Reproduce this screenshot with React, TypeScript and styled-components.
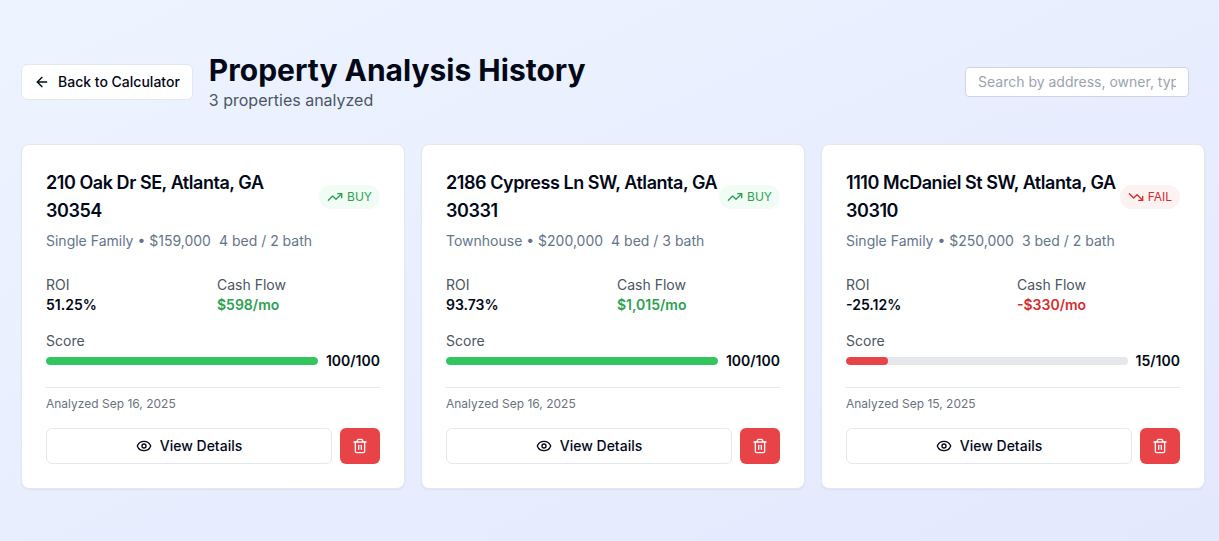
import React from "react";
import styled, { createGlobalStyle } from "styled-components";
import { ArrowLeft, Eye, Trash2, TrendingDown, TrendingUp } from "lucide-react";

type Tone = "good" | "bad";

interface Property {
  id: number;
  address: string;
  kind: string;
  price: string;
  rooms: string;
  verdict: string;
  tone: Tone;
  roi: string;
  cashFlow: string;
  score: number;
  analyzed: string;
}

const properties: Property[] = [
  {
    id: 1,
    address: "210 Oak Dr SE, Atlanta, GA 30354",
    kind: "Single Family",
    price: "$159,000",
    rooms: "4 bed / 2 bath",
    verdict: "BUY",
    tone: "good",
    roi: "51.25%",
    cashFlow: "$598/mo",
    score: 100,
    analyzed: "Sep 16, 2025",
  },
  {
    id: 2,
    address: "2186 Cypress Ln SW, Atlanta, GA 30331",
    kind: "Townhouse",
    price: "$200,000",
    rooms: "4 bed / 3 bath",
    verdict: "BUY",
    tone: "good",
    roi: "93.73%",
    cashFlow: "$1,015/mo",
    score: 100,
    analyzed: "Sep 16, 2025",
  },
  {
    id: 3,
    address: "1110 McDaniel St SW, Atlanta, GA 30310",
    kind: "Single Family",
    price: "$250,000",
    rooms: "3 bed / 2 bath",
    verdict: "FAIL",
    tone: "bad",
    roi: "-25.12%",
    cashFlow: "-$330/mo",
    score: 15,
    analyzed: "Sep 15, 2025",
  },
];

const textColor = { good: "#2ca150", bad: "#d62c2f" };
const tintColor = { good: "#f1fcf5", bad: "#fcf2f2" };
const fillColor = { good: "#34c65e", bad: "#e84448" };

const GlobalStyle = createGlobalStyle`
  *, *::before, *::after { box-sizing: border-box; }
  body {
    margin: 0;
    color: #020817;
    font-family: Inter, "Liberation Sans", sans-serif;
    font-size: 14px;
    line-height: 20px;
  }
  h1, h2, p, dl, dd { margin: 0; }
  button, input { font: inherit; color: inherit; }
`;

const Page = styled.main`
  min-height: 100vh;
  padding: 52px 14px 52px 21px;
  background: linear-gradient(to bottom right, #edf4ff, #e3e8fd);
`;

const Header = styled.header`
  display: flex;
  align-items: center;
  gap: 16px;
  padding-right: 16px;
  margin-bottom: 32px;
`;

const Heading = styled.div`
  flex: 1;
`;

const Title = styled.h1`
  font-size: 30px;
  line-height: 36px;
  font-weight: 700;
`;

const Subtitle = styled.p`
  font-size: 16px;
  line-height: 24px;
  color: #4b5563;
`;

const Button = styled.button`
  display: inline-flex;
  align-items: center;
  justify-content: center;
  gap: 8px;
  height: 36px;
  padding: 0 12px;
  border: 1px solid #e2e8f0;
  border-radius: 6px;
  background: #ffffff;
  font-weight: 500;
  cursor: pointer;
`;

const DetailsButton = styled(Button)`
  flex: 1;
`;

const DeleteButton = styled(Button)`
  border: 0;
  background: #e84448;
  color: #f8fafc;
`;

const Search = styled.input`
  width: 224px;
  padding: 4px 12px;
  border: 1px solid #d1d5db;
  border-radius: 4px;
  background: #ffffff;
  &::placeholder {
    color: #9ca3af;
    opacity: 1;
  }
`;

const Grid = styled.section`
  display: grid;
  grid-template-columns: repeat(auto-fit, minmax(320px, 1fr));
  gap: 16px;
`;

const Card = styled.article`
  padding: 24px;
  border: 1px solid #e2e8f0;
  border-radius: 8px;
  background: #ffffff;
  box-shadow: 0 1px 2px rgba(0, 0, 0, 0.05);
`;

const CardTop = styled.div`
  display: flex;
  align-items: center;
  justify-content: space-between;
`;

const Address = styled.h2`
  font-size: 18px;
  line-height: 28px;
  font-weight: 600;
  letter-spacing: -0.025em;
`;

const Badge = styled.span<{ $tone: Tone }>`
  display: inline-flex;
  flex-shrink: 0;
  align-items: center;
  gap: 4px;
  padding: 4px 8px;
  border-radius: 12px;
  font-size: 12px;
  line-height: 16px;
  color: ${({ $tone }) => textColor[$tone]};
  background: ${({ $tone }) => tintColor[$tone]};
`;

const Summary = styled.p`
  display: flex;
  gap: 8px;
  margin-top: 6px;
  color: #64748b;
`;

const Stats = styled.dl`
  display: grid;
  grid-template-columns: 1fr 1fr;
  gap: 16px 8px;
  margin-top: 24px;
`;

const Stat = styled.div<{ $wide?: boolean }>`
  grid-column: ${({ $wide }) => ($wide ? "1 / -1" : "auto")};
`;

const Label = styled.dt`
  color: #4b5563;
`;

const Value = styled.dd<{ $tone?: Tone }>`
  display: flex;
  align-items: center;
  gap: 8px;
  font-weight: 600;
  color: ${({ $tone }) => ($tone ? textColor[$tone] : "inherit")};
`;

const Track = styled.div`
  flex: 1;
  height: 8px;
  border-radius: 4px;
  background: #e5e7eb;
  overflow: hidden;
`;

const Fill = styled.div<{ $tone: Tone }>`
  height: 100%;
  border-radius: 4px;
  background: ${({ $tone }) => fillColor[$tone]};
`;

const Analyzed = styled.p`
  margin-top: 16px;
  padding-top: 8px;
  border-top: 1px solid #e2e8f0;
  font-size: 12px;
  line-height: 16px;
  color: #6b7280;
`;

const Actions = styled.div`
  display: flex;
  gap: 8px;
  margin-top: 16px;
`;

function PropertyCard({ property }: { property: Property }) {
  const { tone } = property;
  const Trend = tone === "good" ? TrendingUp : TrendingDown;
  return (
    <Card>
      <CardTop>
        <Address>{property.address}</Address>
        <Badge $tone={tone}>
          <Trend size={16} aria-hidden />
          {property.verdict}
        </Badge>
      </CardTop>
      <Summary>
        <span>
          {property.kind} • {property.price}
        </span>
        <span>{property.rooms}</span>
      </Summary>
      <Stats>
        <Stat>
          <Label>ROI</Label>
          <Value>{property.roi}</Value>
        </Stat>
        <Stat>
          <Label>Cash Flow</Label>
          <Value $tone={tone}>{property.cashFlow}</Value>
        </Stat>
        <Stat $wide>
          <Label>Score</Label>
          <Value>
            <Track>
              <Fill $tone={tone} style={{ width: `${property.score}%` }} />
            </Track>
            <span>{property.score}/100</span>
          </Value>
        </Stat>
      </Stats>
      <Analyzed>Analyzed {property.analyzed}</Analyzed>
      <Actions>
        <DetailsButton type="button">
          <Eye size={16} aria-hidden />
          View Details
        </DetailsButton>
        <DeleteButton type="button" aria-label={`Delete ${property.address}`}>
          <Trash2 size={16} aria-hidden />
        </DeleteButton>
      </Actions>
    </Card>
  );
}

export default function App() {
  return (
    <>
      <GlobalStyle />
      <Page>
        <Header>
          <Button type="button">
            <ArrowLeft size={16} aria-hidden />
            Back to Calculator
          </Button>
          <Heading>
            <Title>Property Analysis History</Title>
            <Subtitle>{properties.length} properties analyzed</Subtitle>
          </Heading>
          <Search
            type="text"
            aria-label="Search properties"
            placeholder="Search by address, owner, type..."
          />
        </Header>
        <Grid>
          {properties.map((property) => (
            <PropertyCard key={property.id} property={property} />
          ))}
        </Grid>
      </Page>
    </>
  );
}
